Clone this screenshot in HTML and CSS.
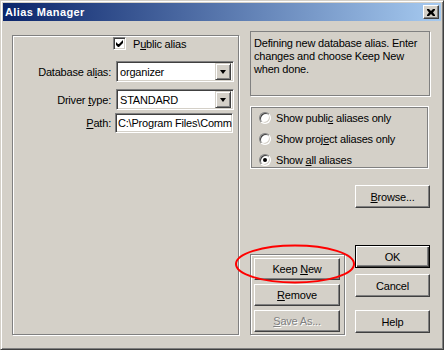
FILE: index.html
```html
<!DOCTYPE html>
<html lang="en">
<head>
    <meta charset="UTF-8">
    <title>Alias Manager</title>
    <link rel="stylesheet" href="styles.css">
</head>
<body>

    <div class="window">
        <!-- Title Bar -->
        <div class="titlebar">
            <span class="title">Alias Manager</span>
            <span class="close-btn">
                <svg width="8" height="7" viewBox="0 0 8 7"><path d="M0 0h2l2 2 2-2h2v1l-2 2.5 2 2.5v1h-2l-2-2-2 2h-2v-1l2-2.5-2-2.5z" fill="#000"/></svg>
            </span>
        </div>

        <div class="client">
            <!-- Alias settings -->
            <div class="group alias-group">
                <div class="check-row">
                    <span class="checkbox">
                        <svg width="7" height="7" viewBox="0 0 7 7"><path d="M0 2v3l2 2h1l4-4v-3l-4 4h-1z" fill="#000"/></svg>
                    </span>
                    <span class="check-label">P<u>u</u>blic alias</span>
                </div>
                <div class="field first-field">
                    <span class="field-label">Database al<u>i</u>as:</span>
                    <div class="combo">
                        <span class="combo-text">organizer</span>
                        <span class="combo-btn"><span class="arrow"></span></span>
                    </div>
                </div>
                <div class="field second-field">
                    <span class="field-label">Driver <u>t</u>ype:</span>
                    <div class="combo">
                        <span class="combo-text">STANDARD</span>
                        <span class="combo-btn"><span class="arrow"></span></span>
                    </div>
                </div>
                <div class="field path-field">
                    <span class="field-label"><u>P</u>ath:</span>
                    <div class="edit">C:\Program Files\Comm</div>
                </div>
            </div>

            <!-- Right side -->
            <div class="side">
                <div class="info">Defining new database alias. Enter changes and choose Keep New when done.</div>

                <div class="radio-group">
                    <div class="radio-row"><span class="radio"></span><span>Show publi<u>c</u> aliases only</span></div>
                    <div class="radio-row"><span class="radio"></span><span>Show proj<u>e</u>ct aliases only</span></div>
                    <div class="radio-row"><span class="radio checked"></span><span>Show <u>a</u>ll aliases</span></div>
                </div>

                <div class="browse-row">
                    <button class="btn"><u>B</u>rowse...</button>
                </div>

                <div class="bottom">
                    <div class="keep-group">
                        <button class="btn wide">Keep <u>N</u>ew</button>
                        <button class="btn wide"><u>R</u>emove</button>
                        <button class="btn wide disabled"><u>S</u>ave As...</button>
                    </div>
                    <div class="main-buttons">
                        <button class="btn default">OK</button>
                        <button class="btn">Cancel</button>
                        <button class="btn help">Help</button>
                    </div>
                </div>
            </div>
        </div>

        <!-- red marker drawn over the dialog -->
        <svg class="marker" width="122" height="41" viewBox="0 0 122 41">
            <ellipse cx="61" cy="20" rx="59" ry="18.5" fill="none" stroke="#ff0000" stroke-width="2"/>
        </svg>
    </div>

</body>
</html>
```

FILE: styles.css
```css
* {
    box-sizing: border-box;
    margin: 0;
    padding: 0;
}

body {
    background: #d4d0c8;
    font-family: "Liberation Sans", Arial, sans-serif;
    font-size: 11px;
    letter-spacing: -0.2px;
    color: #000;
}

.window {
    position: relative;
    width: 444px;
    height: 350px;
    padding: 2px;
    background: #d4d0c8;
    border: 1px solid;
    border-color: #d4d0c8 #404040 #404040 #d4d0c8;
    box-shadow: inset 1px 1px #fff, inset -1px -1px #808080;
}

/* Title Bar */
.titlebar {
    height: 18px;
    display: flex;
    align-items: center;
    justify-content: space-between;
    padding: 0 2px 0 2px;
    background: linear-gradient(to right, #0a246a, #a6caf0);
}

.title {
    color: #fff;
    font-weight: bold;
    font-size: 11px;
    letter-spacing: 0.4px;
}

.close-btn {
    width: 16px;
    height: 14px;
    display: flex;
    align-items: center;
    justify-content: center;
    background: #d4d0c8;
    border: 1px solid;
    border-color: #fff #404040 #404040 #fff;
    box-shadow: inset -1px -1px #808080;
}

.client {
    display: flex;
    align-items: flex-start;
    padding-left: 9px;
}

/* Etched group frames */
.group,
.keep-group {
    border: 1px solid #808080;
    box-shadow: inset 1px 1px #fff, 1px 1px #fff;
}

.alias-group {
    margin-top: 14px;
    width: 227px;
    height: 300px;
}

.check-row {
    display: flex;
    align-items: center;
    margin-top: 1px;
    padding-left: 100px;
    height: 13px;
}

.checkbox {
    width: 13px;
    height: 13px;
    display: flex;
    align-items: center;
    justify-content: center;
    background: #fff;
    border: 1px solid;
    border-color: #808080 #fff #fff #808080;
    box-shadow: inset 1px 1px #404040, inset -1px -1px #d4d0c8;
}

.check-label {
    margin-left: 7px;
}

.field {
    display: flex;
    align-items: center;
}

.field-label {
    width: 98px;
    text-align: right;
}

.first-field {
    margin-top: 11px;
}

.second-field {
    margin-top: 7px;
}

.path-field {
    margin-top: 3px;
}

.combo,
.edit {
    margin-left: 5px;
    width: 118px;
    height: 21px;
    background: #fff;
    border: 1px solid;
    border-color: #808080 #fff #fff #808080;
    box-shadow: inset 1px 1px #404040, inset -1px -1px #d4d0c8;
}

.combo {
    display: flex;
    align-items: center;
    justify-content: space-between;
    padding: 2px;
}

.combo-text {
    padding-left: 1px;
}

.combo-btn {
    width: 16px;
    height: 17px;
    display: flex;
    align-items: center;
    justify-content: center;
    background: #d4d0c8;
    border: 1px solid;
    border-color: #d4d0c8 #404040 #404040 #d4d0c8;
    box-shadow: inset 1px 1px #fff, inset -1px -1px #808080;
}

.arrow {
    width: 0;
    height: 0;
    border-left: 3.5px solid transparent;
    border-right: 3.5px solid transparent;
    border-top: 4px solid #000;
}

.edit {
    margin-left: 4px;
    height: 20px;
    padding: 3px 2px;
    white-space: nowrap;
}

/* Right column */
.side {
    margin-left: 11px;
    margin-top: 10px;
    width: 180px;
}

.info {
    height: 65px;
    padding: 5px 3px;
    line-height: 13px;
    border: 1px solid #808080;
    box-shadow: 1px 1px #fff;
}

.radio-group {
    margin-top: 10px;
    width: 179px;
    height: 63px;
    border: 1px solid #fff;
    box-shadow: inset 0 0 0 1px #808080;
}

.radio-row {
    display: flex;
    align-items: center;
    height: 21px;
    padding-left: 8px;
}

.radio {
    width: 12px;
    height: 12px;
    margin-right: 5px;
    border-radius: 50%;
    background: #fff;
    border: 1px solid;
    border-color: #808080 #fff #fff #808080;
    box-shadow: inset 1px 1px #404040, inset -1px -1px #d4d0c8;
    display: flex;
    align-items: center;
    justify-content: center;
}

.radio.checked::after {
    content: "";
    width: 4px;
    height: 4px;
    border-radius: 50%;
    background: #000;
}

.browse-row {
    display: flex;
    justify-content: flex-end;
    margin-top: 16px;
}

/* Buttons */
.btn {
    width: 75px;
    height: 23px;
    font-family: inherit;
    font-size: 11px;
    letter-spacing: inherit;
    color: #000;
    background: #d4d0c8;
    border: 1px solid;
    border-color: #fff #404040 #404040 #fff;
    box-shadow: inset -1px -1px #808080;
}

.btn.default {
    border: 1px solid #000;
    box-shadow: inset 1px 1px #fff, inset -1px -1px #404040, inset -2px -2px #808080;
}

.btn.wide {
    width: 86px;
    height: 22px;
}

.btn.disabled {
    color: #808080;
    text-shadow: 1px 1px #fff;
}

.bottom {
    display: flex;
    align-items: flex-start;
    margin-top: 37px;
}

.keep-group {
    margin-top: 9px;
    width: 95px;
    height: 81px;
    padding: 3px 0 0 3px;
    display: flex;
    flex-direction: column;
    gap: 4px;
}

.main-buttons {
    margin-left: 10px;
    display: flex;
    flex-direction: column;
    gap: 6px;
}

.btn.help {
    margin-top: 7px;
}

/* Red highlight around Keep New */
.marker {
    position: absolute;
    left: 233px;
    top: 243px;
}
```
